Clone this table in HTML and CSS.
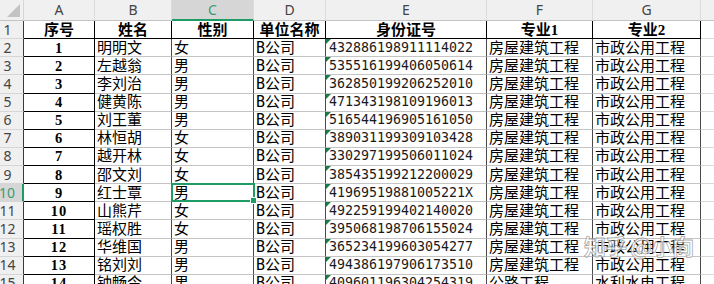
FILE: index.html
```html
<!DOCTYPE html>
<html lang="zh-CN">
<head>
<meta charset="utf-8">
<title>Sheet</title>
<link rel="stylesheet" href="styles.css">
</head>
<body>
<div class="sheet">
  <div class="corner"><span class="tri"></span></div>
  <div class="ch">A</div><div class="ch">B</div><div class="ch on">C</div><div class="ch">D</div><div class="ch">E</div><div class="ch">F</div><div class="ch">G</div><div class="ch end"></div>

  <div class="rh">1</div>
  <div class="th">序号</div><div class="th">姓名</div><div class="th">性别</div><div class="th">单位名称</div><div class="th">身份证号</div><div class="th">专业1</div><div class="th">专业2</div><div class="bl"></div>

  <div class="rh">2</div><div class="num">1</div><div class="td">明明文</div><div class="td">女</div><div class="td">B公司</div><div class="td id">432886198911114022</div><div class="td">房屋建筑工程</div><div class="td">市政公用工程</div><div class="bl"></div>
  <div class="rh">3</div><div class="num">2</div><div class="td">左越翁</div><div class="td">男</div><div class="td">B公司</div><div class="td id">535516199406050614</div><div class="td">房屋建筑工程</div><div class="td">市政公用工程</div><div class="bl"></div>
  <div class="rh">4</div><div class="num">3</div><div class="td">李刘治</div><div class="td">男</div><div class="td">B公司</div><div class="td id">362850199206252010</div><div class="td">房屋建筑工程</div><div class="td">市政公用工程</div><div class="bl"></div>
  <div class="rh">5</div><div class="num">4</div><div class="td">健黄陈</div><div class="td">男</div><div class="td">B公司</div><div class="td id">471343198109196013</div><div class="td">房屋建筑工程</div><div class="td">市政公用工程</div><div class="bl"></div>
  <div class="rh">6</div><div class="num">5</div><div class="td">刘王董</div><div class="td">男</div><div class="td">B公司</div><div class="td id">516544196905161050</div><div class="td">房屋建筑工程</div><div class="td">市政公用工程</div><div class="bl"></div>
  <div class="rh">7</div><div class="num">6</div><div class="td">林恒胡</div><div class="td">女</div><div class="td">B公司</div><div class="td id">389031199309103428</div><div class="td">房屋建筑工程</div><div class="td">市政公用工程</div><div class="bl"></div>
  <div class="rh">8</div><div class="num">7</div><div class="td">越开林</div><div class="td">女</div><div class="td">B公司</div><div class="td id">330297199506011024</div><div class="td">房屋建筑工程</div><div class="td">市政公用工程</div><div class="bl"></div>
  <div class="rh">9</div><div class="num">8</div><div class="td">邵文刘</div><div class="td">女</div><div class="td">B公司</div><div class="td id">385435199212200029</div><div class="td">房屋建筑工程</div><div class="td">市政公用工程</div><div class="bl"></div>
  <div class="rh on">10</div><div class="num">9</div><div class="td">红士覃</div><div class="td sel">男</div><div class="td">B公司</div><div class="td id">41969519881005221X</div><div class="td">房屋建筑工程</div><div class="td">市政公用工程</div><div class="bl"></div>
  <div class="rh">11</div><div class="num">10</div><div class="td">山熊芹</div><div class="td">女</div><div class="td">B公司</div><div class="td id">492259199402140020</div><div class="td">房屋建筑工程</div><div class="td">市政公用工程</div><div class="bl"></div>
  <div class="rh">12</div><div class="num">11</div><div class="td">瑶权胜</div><div class="td">女</div><div class="td">B公司</div><div class="td id">395068198706155024</div><div class="td">房屋建筑工程</div><div class="td">市政公用工程</div><div class="bl"></div>
  <div class="rh">13</div><div class="num">12</div><div class="td">华维国</div><div class="td">男</div><div class="td">B公司</div><div class="td id">365234199603054277</div><div class="td">房屋建筑工程</div><div class="td">市政公用工程</div><div class="bl"></div>
  <div class="rh">14</div><div class="num">13</div><div class="td">铭刘刘</div><div class="td">男</div><div class="td">B公司</div><div class="td id">494386197906173510</div><div class="td">房屋建筑工程</div><div class="td">市政公用工程</div><div class="bl"></div>
  <div class="rh">15</div><div class="num">14</div><div class="td">钟畅令</div><div class="td">男</div><div class="td">B公司</div><div class="td id">409601196304254319</div><div class="td">公路工程</div><div class="td">水利水电工程</div><div class="bl"></div>

  <div class="wm">知乎 @小向</div>
</div>
</body>
</html>
```

FILE: styles.css
```css
html, body {
  margin: 0;
  padding: 0;
  background: #ffffff;
}
body {
  width: 714px;
  height: 284px;
  overflow: hidden;
}
.sheet {
  position: relative;
  display: grid;
  grid-template-columns: 24px 71px 77px 82px 72px 161px 106px 108px 1fr;
  grid-template-rows: 21px repeat(15, 18.14px);
  width: 714px;
  font-family: "DejaVu Sans Mono", "Noto Sans CJK SC", sans-serif;
  font-size: 15px;
  color: #000;
}
.sheet > div {
  box-sizing: border-box;
  display: flex;
  align-items: center;
  white-space: nowrap;
  overflow: visible;
  line-height: 18px;
}
.corner {
  background: #f0f0f0;
  border-right: 1px solid #d6d6d6;
  border-bottom: 1px solid #c4c4c4;
  position: relative;
}
.tri {
  position: absolute;
  right: 3px;
  bottom: 3px;
  width: 0;
  height: 0;
  border-left: 13px solid transparent;
  border-bottom: 13px solid #c3c3c3;
}
.ch {
  background: #f0f0f0;
  border-right: 1px solid #dcdcdc;
  border-bottom: 1px solid #c4c4c4;
  justify-content: center;
  font-family: "Noto Sans", sans-serif;
  font-size: 14px;
  color: #444;
}
.ch.on {
  background: #d6d6d6;
  color: #3d9b72;
  border-bottom: 2px solid #1f9b66;
}
.ch.end {
  border-right: none;
}
.rh {
  background: #f0f0f0;
  border-right: 1px solid #3a3a3a;
  border-bottom: 1px solid #d6d6d6;
  justify-content: center;
  padding-right: 8px;
  font-family: "Noto Sans", sans-serif;
  font-size: 14px;
  color: #444;
}
.rh.on {
  background: #d6d6d6;
  color: #3d9b72;
  border-right: 2px solid #1f9b66;
}
.th {
  justify-content: center;
  font-family: "Liberation Serif", "Noto Sans CJK SC", serif;
  font-weight: 700;
  font-size: 15px;
  border-right: 1px solid #000;
  border-bottom: 1px solid #000;
}
.num {
  justify-content: center;
  font-family: "Liberation Serif", serif;
  font-weight: 700;
  font-size: 14.5px;
  letter-spacing: 1px;
  border-right: 1px solid #000;
  border-bottom: 1px solid #000;
}
.td {
  padding-left: 2px;
  border-right: 1px solid #4a4a4a;
  border-bottom: 1px solid #c4c4c4;
}
.td.id {
  position: relative;
  font-size: 13.3px;
  padding-left: 3px;
  color: #1a1a1a;
}
.td.id::before {
  content: "";
  position: absolute;
  left: 0;
  top: 0;
  width: 0;
  height: 0;
  border-top: 5px solid #1d7a4c;
  border-right: 5px solid transparent;
}
.bl {
  border-bottom: 1px solid #d8d8d8;
}
.sel {
  position: relative;
}
.sel::after {
  content: "";
  position: absolute;
  left: -1px;
  top: -1px;
  right: -2px;
  bottom: -1px;
  border: 2px solid #1f9b66;
  z-index: 2;
}
.sel::before {
  content: "";
  position: absolute;
  right: -4px;
  bottom: -3px;
  width: 5px;
  height: 5px;
  background: #1f9b66;
  border: 1px solid #fff;
  z-index: 3;
}
.sheet > .wm {
  position: absolute;
  left: 584px;
  top: 236px;
  font-family: "Noto Sans CJK SC", sans-serif;
  font-size: 22px;
  font-weight: 700;
  letter-spacing: -1px;
  color: rgba(255, 255, 255, 0.72);
  -webkit-text-stroke: 0.8px rgba(130, 130, 130, 0.7);
  z-index: 5;
}
```
